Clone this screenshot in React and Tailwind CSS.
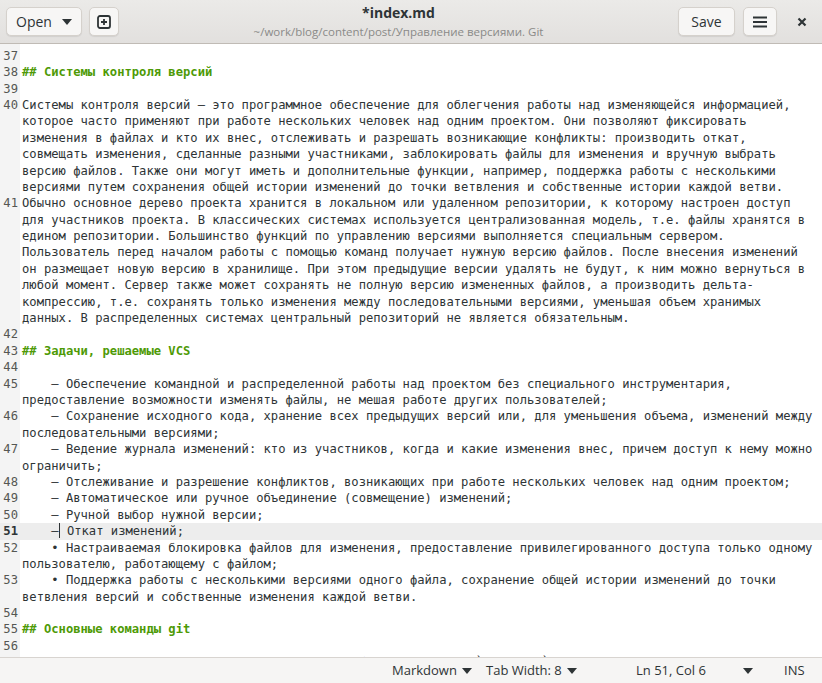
import React from "react";

const ui = { fontFamily: '"Open Sans", "Noto Sans", sans-serif' };
const mono = { fontFamily: '"DejaVu Sans Mono", "Liberation Mono", monospace' };

// each logical line: number, wrapped rows, heading flag
const lines = [
  { n: 36, rows: [""] },
  { n: 37, rows: [""] },
  { n: 38, rows: ["## Системы контроля версий"], h: true },
  { n: 39, rows: [""] },
  {
    n: 40,
    rows: [
      "Системы контроля версий – это программное обеспечение для облегчения работы над изменяющейся информацией,",
      "которое часто применяют при работе нескольких человек над одним проектом. Они позволяют фиксировать",
      "изменения в файлах и кто их внес, отслеживать и разрешать возникающие конфликты: производить откат,",
      "совмещать изменения, сделанные разными участниками, заблокировать файлы для изменения и вручную выбрать",
      "версию файлов. Также они могут иметь и дополнительные функции, например, поддержка работы с несколькими",
      "версиями путем сохранения общей истории изменений до точки ветвления и собственные истории каждой ветви.",
    ],
  },
  {
    n: 41,
    rows: [
      "Обычно основное дерево проекта хранится в локальном или удаленном репозитории, к которому настроен доступ",
      "для участников проекта. В классических системах используется централизованная модель, т.е. файлы хранятся в",
      "едином репозитории. Большинство функций по управлению версиями выполняется специальным сервером.",
      "Пользователь перед началом работы с помощью команд получает нужную версию файлов. После внесения изменений",
      "он размещает новую версию в хранилище. При этом предыдущие версии удалять не будут, к ним можно вернуться в",
      "любой момент. Сервер также может сохранять не полную версию измененных файлов, а производить дельта-",
      "компрессию, т.е. сохранять только изменения между последовательными версиями, уменьшая объем хранимых",
      "данных. В распределенных системах центральный репозиторий не является обязательным.",
    ],
  },
  { n: 42, rows: [""] },
  { n: 43, rows: ["## Задачи, решаемые VCS"], h: true },
  { n: 44, rows: [""] },
  {
    n: 45,
    rows: [
      "    – Обеспечение командной и распределенной работы над проектом без специального инструментария,",
      "предоставление возможности изменять файлы, не мешая работе других пользователей;",
    ],
  },
  {
    n: 46,
    rows: [
      "    – Сохранение исходного кода, хранение всех предыдущих версий или, для уменьшения объема, изменений между",
      "последовательными версиями;",
    ],
  },
  {
    n: 47,
    rows: [
      "    – Ведение журнала изменений: кто из участников, когда и какие изменения внес, причем доступ к нему можно",
      "ограничить;",
    ],
  },
  { n: 48, rows: ["    – Отслеживание и разрешение конфликтов, возникающих при работе нескольких человек над одним проектом;"] },
  { n: 49, rows: ["    – Автоматическое или ручное объединение (совмещение) изменений;"] },
  { n: 50, rows: ["    – Ручной выбор нужной версии;"] },
  { n: 51, rows: ["    –", " Откат изменений;"], cur: true },
  {
    n: 52,
    rows: [
      "    • Настраиваемая блокировка файлов для изменения, предоставление привилегированного доступа только одному",
      "пользователю, работающему с файлом;",
    ],
  },
  {
    n: 53,
    rows: [
      "    • Поддержка работы с несколькими версиями одного файла, сохранение общей истории изменений до точки",
      "ветвления версий и собственные изменения каждой ветви.",
    ],
  },
  { n: 54, rows: [""] },
  { n: 55, rows: ["## Основные команды git"], h: true },
  { n: 56, rows: [""] },
  { n: 57, rows: ["    – Создание нового репозитория в текущем рабочем каталоге: `git init`"] },
];

function Caret() {
  return (
    <svg width="10" height="6" viewBox="0 0 10 6" className="inline-block">
      <path d="M0 0h10L5 6z" fill="#2e3436" />
    </svg>
  );
}

function Line({ l }) {
  if (l.cur) {
    return (
      <div className="flex bg-[#ededed]">
        <div className="w-[20px] shrink-0 pr-[2px] text-right font-bold text-[#2e3436] bg-[#ededed]">{l.n}</div>
        <div className="flex-1 pl-[2px] whitespace-pre text-[#2e3436]">
          {l.rows[0]}
          <span className="inline-block w-px h-[15px] bg-[#2e3436] align-middle -mt-[2px]" />
          {l.rows[1]}
        </div>
      </div>
    );
  }
  return (
    <div className="flex">
      <div className="w-[20px] shrink-0 pr-[2px] text-right text-[#555753] bg-[#f4f4f4]">
        {l.rows.map((_, i) => (
          <div key={i} className="h-[16.4px]">{i === 0 ? l.n : ""}</div>
        ))}
      </div>
      <div className={`flex-1 pl-[2px] whitespace-pre ${l.h ? "text-[#4e9a06] font-bold" : "text-[#2e3436]"}`}>
        {l.rows.map((r, i) => (
          <div key={i} className="h-[16.4px]">{r}</div>
        ))}
      </div>
    </div>
  );
}

export default function App() {
  return (
    <div className="w-[822px] h-[683px] flex flex-col bg-white overflow-hidden" style={ui}>
      {/* header bar */}
      <div className="h-[44px] shrink-0 flex items-center pl-[6px] bg-gradient-to-b from-[#ebeae8] to-[#e2e0de] border-b border-[#c0bbb5]">
        <button className="h-[29px] w-[76px] flex items-center justify-center gap-[10px] rounded-[5px] border border-[#d5d1cc] bg-[#f7f6f5] shadow-[0_1px_1px_rgba(0,0,0,0.08)] text-[14px] text-[#2e3436]">
          <span>Open</span>
          <Caret />
        </button>
        <button className="ml-[7px] h-[29px] w-[30px] flex items-center justify-center rounded-[5px] border border-[#d5d1cc] bg-[#f7f6f5] shadow-[0_1px_1px_rgba(0,0,0,0.08)]">
          <svg width="14" height="14" viewBox="0 0 14 14">
            <rect x="1" y="1" width="12" height="12" rx="2" fill="none" stroke="#2e3436" strokeWidth="1.8" />
            <path d="M7 4v6M4 7h6" stroke="#2e3436" strokeWidth="1.8" />
          </svg>
        </button>
        <div className="flex-1 flex flex-col items-center leading-none">
          <div className="text-[14px] font-bold text-[#2e3436] mt-[1px]">*index.md</div>
          <div className="text-[11.5px] text-[#8a8a88] mt-[6px]">~/work/blog/content/post/Управление версиями. Git</div>
        </div>
        <button className="h-[29px] w-[57px] flex items-center justify-center rounded-[5px] border border-[#d5d1cc] bg-[#f7f6f5] shadow-[0_1px_1px_rgba(0,0,0,0.08)] text-[14px] text-[#2e3436]">
          Save
        </button>
        <button className="ml-[8px] h-[29px] w-[34px] flex items-center justify-center rounded-[5px] border border-[#d5d1cc] bg-[#f7f6f5] shadow-[0_1px_1px_rgba(0,0,0,0.08)]">
          <svg width="14" height="12" viewBox="0 0 14 12">
            <path d="M0 1.5h14M0 6h14M0 10.5h14" stroke="#2e3436" strokeWidth="2" />
          </svg>
        </button>
        <div className="w-[45px] pl-[5px] flex items-center justify-center">
          <svg width="10" height="10" viewBox="0 0 10 10">
            <path d="M1.5 1.5l7 7M8.5 1.5l-7 7" stroke="#2e3436" strokeWidth="2.2" />
          </svg>
        </div>
      </div>

      {/* editor */}
      <div className="flex-1 overflow-hidden relative bg-white">
        <div className="absolute left-0 top-0 bottom-0 w-[20px] bg-[#f4f4f4]" />
        <div className="relative -mt-[12.6px] text-[12.16px] leading-[16.4px]" style={mono}>
          {lines.map((l) => (
            <Line key={l.n} l={l} />
          ))}
        </div>
      </div>

      {/* status bar */}
      <div className="h-[26px] shrink-0 flex items-center border-t border-[#d8d4d0] bg-[#f6f5f4] text-[13px] text-[#2e3436]">
        <div className="ml-auto w-[94px] flex items-center gap-[5px] pl-[12px]">
          <span>Markdown</span>
          <Caret />
        </div>
        <div className="w-[162px] flex items-center gap-[5px] pl-[12px]">
          <span>Tab Width: 8</span>
          <Caret />
        </div>
        <div className="w-[107px]">Ln 51, Col 6</div>
        <div className="w-[41px] flex items-center">
          <Caret />
        </div>
        <div className="w-[38px]">INS</div>
      </div>
    </div>
  );
}
